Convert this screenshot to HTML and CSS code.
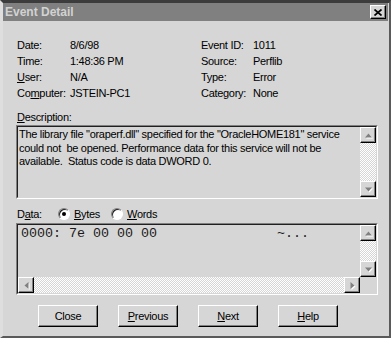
FILE: index.html
```html
<!DOCTYPE html>
<html>
<head>
<meta charset="utf-8">
<title>Event Detail</title>
<link rel="stylesheet" href="styles.css">
</head>
<body>
<div class="window">
  <div class="titlebar">
    <span class="title">Event Detail</span>
    <span class="close-btn"><svg width="8" height="7" viewBox="0 0 8 7"><path d="M0.5 0.5 L7.5 6.5 M7.5 0.5 L0.5 6.5" stroke="#000" stroke-width="1.7" fill="none"/></svg></span>
  </div>
  <div class="content">
    <div class="info">
      <span>Date:</span><span>8/6/98</span><span>Event ID:</span><span>1011</span>
      <span>Time:</span><span>1:48:36 PM</span><span>Source:</span><span>Perflib</span>
      <span><u>U</u>ser:</span><span>N/A</span><span>Type:</span><span>Error</span>
      <span>Co<u>m</u>puter:</span><span>JSTEIN-PC1</span><span>Category:</span><span>None</span>
    </div>
    <div class="field-label"><u>D</u>escription:</div>
    <div class="sunken desc-box">
      <div class="sunken-inner">
        <div class="desc-text">The library file "oraperf.dll" specified for the "OracleHOME181" service
could not  be opened. Performance data for this service will not be
available.  Status code is data DWORD 0.</div>
        <div class="vscroll">
          <div class="sb-btn"><svg width="7" height="5" viewBox="0 0 7 5"><polygon points="3.5,0.5 7,4.5 0,4.5" fill="#808080"/></svg></div>
          <div class="trough"></div>
          <div class="sb-btn"><svg width="7" height="5" viewBox="0 0 7 5"><polygon points="0,0.5 7,0.5 3.5,4.5" fill="#808080"/></svg></div>
        </div>
      </div>
    </div>
    <div class="data-row">
      <span class="data-label">D<u>a</u>ta:</span>
      <span class="radio checked"></span><span class="radio-text"><u>B</u>ytes</span>
      <span class="radio second"></span><span class="radio-text"><u>W</u>ords</span>
    </div>
    <div class="sunken data-box">
      <div class="sunken-inner data-inner">
        <div class="data-top">
          <div class="data-text">0000: 7e 00 00 00               ~...</div>
          <div class="vscroll">
            <div class="sb-btn"><svg width="7" height="5" viewBox="0 0 7 5"><polygon points="3.5,0.5 7,4.5 0,4.5" fill="#808080"/></svg></div>
            <div class="trough"></div>
            <div class="sb-btn"><svg width="7" height="5" viewBox="0 0 7 5"><polygon points="0,0.5 7,0.5 3.5,4.5" fill="#808080"/></svg></div>
          </div>
        </div>
        <div class="hscroll">
          <div class="sb-btn"><svg width="5" height="7" viewBox="0 0 5 7"><polygon points="0.5,3.5 4.5,0 4.5,7" fill="#808080"/></svg></div>
          <div class="trough"></div>
          <div class="sb-btn"><svg width="5" height="7" viewBox="0 0 5 7"><polygon points="0.5,0 4.5,3.5 0.5,7" fill="#808080"/></svg></div>
          <div class="corner"></div>
        </div>
      </div>
    </div>
    <div class="buttons">
      <span class="btn">Close</span>
      <span class="btn"><u>P</u>revious</span>
      <span class="btn"><u>N</u>ext</span>
      <span class="btn"><u>H</u>elp</span>
    </div>
  </div>
</div>
</body>
</html>
```

FILE: styles.css
```css
html, body {
  margin: 0;
  padding: 0;
  background: #d6d6d6;
}

.window {
  width: 391px;
  height: 338px;
  box-sizing: border-box;
  background: #d6d6d6;
  border-top: 3px solid #3c3c3c;
  border-left: 3px solid #dedede;
  border-right: 2px solid #5a5a5a;
  border-bottom: 2px solid #5a5a5a;
  font-family: "Liberation Sans", Arial, sans-serif;
  font-size: 11px;
  letter-spacing: -0.3px;
  color: #000;
}

.titlebar {
  height: 18px;
  margin-right: 1px;
  background: #808080;
  display: flex;
  align-items: center;
  justify-content: space-between;
  padding: 0 2px 0 2px;
}

.title {
  font-weight: bold;
  font-size: 12px;
  letter-spacing: 0;
  color: #d2d2d2;
}

.close-btn {
  width: 16px;
  height: 14px;
  box-sizing: border-box;
  background: #d6d6d6;
  border-top: 1px solid #fff;
  border-left: 1px solid #fff;
  border-right: 1px solid #000;
  border-bottom: 1px solid #000;
  box-shadow: inset -1px -1px #808080;
  display: flex;
  align-items: center;
  justify-content: center;
}

.content {
  padding-left: 13px;
  display: flex;
  flex-direction: column;
}

.info {
  margin-top: 16px;
  padding-left: 1px;
  display: grid;
  grid-template-columns: 53px 131px 52px 1fr;
  grid-auto-rows: 16px;
  line-height: 16px;
}

.field-label {
  margin-top: 8px;
  padding-left: 1px;
  line-height: 16px;
  height: 16px;
}

.sunken {
  width: 362px;
  box-sizing: border-box;
  border: 1px solid;
  border-color: #808080 #fff #fff #808080;
}

.sunken-inner {
  height: 100%;
  box-sizing: border-box;
  border: 1px solid;
  border-color: #202020 #d6d6d6 #d6d6d6 #202020;
  display: flex;
}

.desc-box {
  height: 74px;
}

.desc-text {
  flex: 1;
  white-space: pre;
  line-height: 13.5px;
  padding: 1px 0 0 1px;
  overflow: hidden;
}

.vscroll {
  width: 16px;
  display: flex;
  flex-direction: column;
}

.trough {
  flex: 1;
  background-color: #d6d6d6;
  background-image: repeating-conic-gradient(#ffffff 0% 25%, #d6d6d6 0% 50%);
  background-size: 2px 2px;
}

.sb-btn {
  width: 16px;
  height: 16px;
  flex: none;
  box-sizing: border-box;
  background: #d6d6d6;
  border-top: 1px solid #fff;
  border-left: 1px solid #fff;
  border-right: 1px solid #000;
  border-bottom: 1px solid #000;
  box-shadow: inset -1px -1px #808080;
  display: flex;
  align-items: center;
  justify-content: center;
}

.sb-btn svg {
  filter: drop-shadow(1px 1px 0 #fff);
}

.data-row {
  margin-top: 5px;
  height: 19px;
  padding-left: 1px;
  display: flex;
  align-items: center;
}

.data-label {
  width: 41px;
}

.radio {
  width: 12px;
  height: 12px;
  box-sizing: border-box;
  border-radius: 50%;
  border: 1px solid;
  border-color: #808080 #fff #fff #808080;
  background: #fff;
  box-shadow: inset 1px 1px #202020;
  display: flex;
  align-items: center;
  justify-content: center;
  flex: none;
}

.radio.checked::after {
  content: "";
  width: 4px;
  height: 4px;
  border-radius: 50%;
  background: #000;
}

.radio.second {
  margin-left: 11px;
}

.radio-text {
  margin-left: 4px;
}

.data-box {
  height: 72px;
}

.data-inner {
  flex-direction: column;
}

.data-top {
  flex: 1;
  display: flex;
}

.data-text {
  flex: 1;
  white-space: pre;
  font-family: "Liberation Mono", "Courier New", monospace;
  font-size: 13.33px;
  letter-spacing: 0;
  line-height: 15px;
  padding: 1px 0 0 3px;
  overflow: hidden;
  color: #1a1a1a;
}

.hscroll {
  height: 16px;
  display: flex;
}

.hscroll .trough {
  flex: 1;
}

.corner {
  width: 16px;
  background: #d6d6d6;
}

.buttons {
  margin-top: 10px;
  padding-left: 22px;
  display: flex;
  gap: 20px;
}

.btn {
  width: 60px;
  height: 22px;
  box-sizing: border-box;
  border-top: 1px solid #fff;
  border-left: 1px solid #fff;
  border-right: 1px solid #000;
  border-bottom: 1px solid #000;
  box-shadow: inset -1px -1px #808080;
  display: flex;
  align-items: center;
  justify-content: center;
  font-size: 11px;
}
```
